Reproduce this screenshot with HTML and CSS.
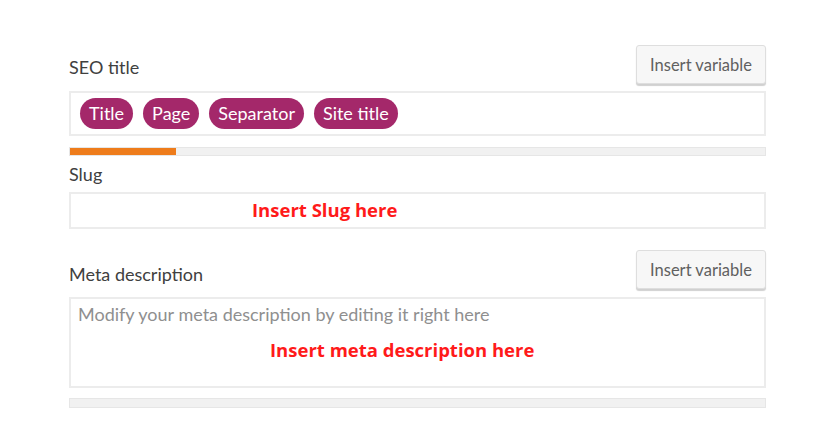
FILE: index.html
```html
<!DOCTYPE html>
<html lang="en">

<head>
    <meta charset="UTF-8">
    <meta name="viewport" content="width=device-width, initial-scale=1.0">
    <title>Snippet editor</title>
    <link rel="stylesheet" href="styles.css">
</head>

<body>

    <section class="snippet-editor">

        <div class="field-head">
            <label class="field-label">SEO title</label>
            <button class="insert-btn">Insert variable</button>
        </div>
        <div class="input title-input">
            <span class="pill">Title</span>
            <span class="pill">Page</span>
            <span class="pill">Separator</span>
            <span class="pill">Site title</span>
        </div>
        <div class="progress">
            <div class="progress-fill" style="width: 106px"></div>
        </div>

        <div class="field-head slug-head">
            <label class="field-label">Slug</label>
        </div>
        <div class="input slug-input">
            <span class="hint slug-hint">Insert Slug here</span>
        </div>

        <div class="field-head meta-head">
            <label class="field-label">Meta description</label>
            <button class="insert-btn">Insert variable</button>
        </div>
        <div class="input meta-input">
            <div class="placeholder">Modify your meta description by editing it right here</div>
            <span class="hint meta-hint">Insert meta description here</span>
        </div>
        <div class="progress empty"></div>

    </section>

</body>

</html>
```

FILE: styles.css
```css
body {
    margin: 0;
    padding: 0;
    background-color: #ffffff;
    font-family: Lato, "Open Sans", sans-serif;
    color: #444444;
}

.snippet-editor {
    width: 697px;
    padding: 45px 0 0 69px;
}

.field-head {
    display: flex;
    justify-content: space-between;
    align-items: flex-end;
    height: 39px;
}

.field-label {
    font-size: 18px;
    line-height: 22px;
    padding-bottom: 6px;
    color: #404040;
}

.insert-btn {
    height: 39px;
    width: 130px;
    background-color: #f7f7f7;
    border: 1px solid #dedede;
    border-radius: 3px;
    box-shadow: 0 2px 1px #d0d0d0;
    font-family: Lato, "Open Sans", sans-serif;
    font-size: 16.5px;
    color: #606060;
    padding: 0;
}

.input {
    box-sizing: border-box;
    border: 2px solid #ececec;
    background-color: #ffffff;
}

.title-input {
    margin-top: 7px;
    height: 45px;
    display: flex;
    align-items: center;
    gap: 10px;
    padding-left: 9px;
}

.pill {
    background-color: #a4286a;
    color: #ffffff;
    font-size: 18px;
    line-height: 31px;
    padding: 0 9px;
    border-radius: 16px;
}

.progress {
    margin-top: 11px;
    height: 9px;
    box-sizing: border-box;
    background-color: #f1f1f1;
    border: 1px solid #e6e6e6;
}

.progress-fill {
    height: 7px;
    background-color: #ee7c1b;
}

.slug-head {
    height: 22px;
    margin-top: 7px;
}

.slug-head .field-label {
    padding-bottom: 0;
}

.slug-input {
    margin-top: 7px;
    height: 37px;
    display: flex;
    align-items: center;
    padding-bottom: 3px;
}

.hint {
    font-family: "Open Sans", sans-serif;
    font-weight: 700;
    font-size: 18.5px;
    line-height: 25px;
    color: #ff1a1a;
}

.slug-hint {
    margin-left: 181px;
}

.meta-head {
    margin-top: 21px;
}

.meta-head .field-label {
    padding-bottom: 4px;
}

.meta-input {
    margin-top: 8px;
    height: 91px;
    padding: 4px 0 0 7px;
}

.placeholder {
    font-size: 18px;
    line-height: 22px;
    color: #8f8f8f;
}

.meta-input .meta-hint {
    display: block;
    margin: 12px 0 0 192px;
}

.progress.empty {
    margin-top: 10px;
    height: 10px;
}
```
